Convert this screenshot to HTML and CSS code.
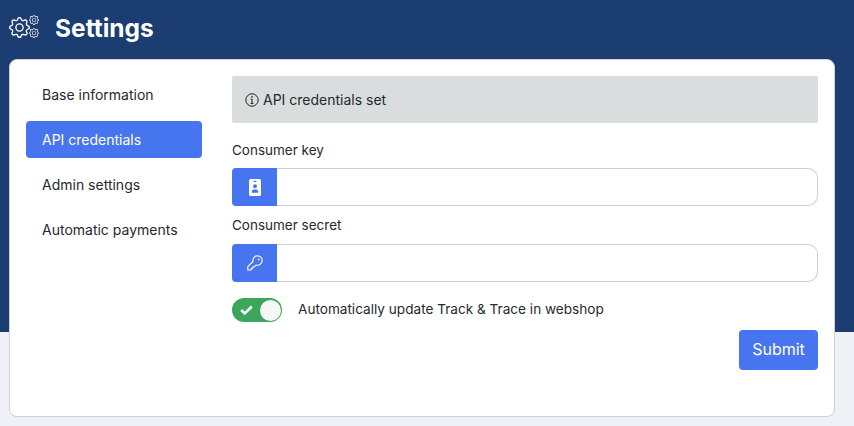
FILE: index.html
```html
<!DOCTYPE html>
<html lang="en">
<head>
    <meta charset="UTF-8">
    <meta name="viewport" content="width=device-width, initial-scale=1.0">
    <title>Settings</title>
    <link rel="stylesheet" href="styles.css">
</head>
<body>
    <svg class="icon-defs" width="0" height="0">
        <symbol id="gear" viewBox="0 0 16 16">
            <path d="M8 4.754a3.246 3.246 0 1 0 0 6.492 3.246 3.246 0 0 0 0-6.492zM5.754 8a2.246 2.246 0 1 1 4.492 0 2.246 2.246 0 0 1-4.492 0z"/>
            <path d="M9.796 1.343c-.527-1.79-3.065-1.79-3.592 0l-.094.319a.873.873 0 0 1-1.255.52l-.292-.16c-1.64-.892-3.433.902-2.54 2.541l.159.292a.873.873 0 0 1-.52 1.255l-.319.094c-1.79.527-1.79 3.065 0 3.592l.319.094a.873.873 0 0 1 .52 1.255l-.16.292c-.892 1.64.901 3.434 2.541 2.54l.292-.159a.873.873 0 0 1 1.255.52l.094.319c.527 1.79 3.065 1.79 3.592 0l.094-.319a.873.873 0 0 1 1.255-.52l.292.16c1.64.893 3.434-.902 2.54-2.541l-.159-.292a.873.873 0 0 1 .52-1.255l.319-.094c1.79-.527 1.79-3.065 0-3.592l-.319-.094a.873.873 0 0 1-.52-1.255l.16-.292c.893-1.64-.902-3.433-2.541-2.54l-.292.159a.873.873 0 0 1-1.255-.52l-.094-.319zm-2.633.283c.246-.835 1.428-.835 1.674 0l.094.319a1.873 1.873 0 0 0 2.693 1.115l.291-.16c.764-.415 1.6.42 1.184 1.185l-.159.292a1.873 1.873 0 0 0 1.116 2.692l.318.094c.835.246.835 1.428 0 1.674l-.319.094a1.873 1.873 0 0 0-1.115 2.693l.16.291c.415.764-.42 1.6-1.185 1.184l-.291-.159a1.873 1.873 0 0 0-2.693 1.116l-.094.318c-.246.835-1.428.835-1.674 0l-.094-.319a1.873 1.873 0 0 0-2.692-1.115l-.292.16c-.764.415-1.6-.42-1.184-1.185l.159-.291A1.873 1.873 0 0 0 1.945 8.93l-.319-.094c-.835-.246-.835-1.428 0-1.674l.319-.094A1.873 1.873 0 0 0 3.06 4.377l-.16-.292c-.415-.764.42-1.6 1.185-1.184l.292.159a1.873 1.873 0 0 0 2.692-1.115l.094-.319z"/>
        </symbol>
    </svg>

    <header class="topbar">
        <svg class="logo" width="31" height="25" viewBox="0 0 31 25" fill="#fff">
            <use href="#gear" x="0" y="3" width="21" height="21"/>
            <use href="#gear" x="20" y="1" width="10" height="10"/>
            <use href="#gear" x="20" y="14" width="10" height="10"/>
        </svg>
        <h1>Settings</h1>
    </header>

    <main class="card">
        <nav class="side-nav">
            <a class="nav-item">Base information</a>
            <a class="nav-item active">API credentials</a>
            <a class="nav-item">Admin settings</a>
            <a class="nav-item">Automatic payments</a>
        </nav>

        <form class="panel">
            <div class="alert">
                <svg width="14" height="14" viewBox="0 0 14 14" fill="none" stroke="#222" stroke-width="1">
                    <circle cx="7" cy="7" r="6.200"/>
                    <path d="M7 6v4.400M5.800 6.200H7M5.600 10.400h2.800"/>
                    <circle cx="7" cy="3.900" r=".8" fill="#222" stroke="none"/>
                </svg>
                <span>API credentials set</span>
            </div>

            <label class="field-label" for="consumer-key">Consumer key</label>
            <div class="input-group">
                <span class="addon">
                    <svg width="12" height="17" viewBox="0 0 12 17">
                        <path fill="#fff" d="M1.500 0h9A1.500 1.500 0 0 1 12 1.500v14a1.500 1.500 0 0 1-1.500 1.500h-9A1.500 1.500 0 0 1 0 15.500v-14A1.500 1.500 0 0 1 1.500 0z"/>
                        <rect x="4.500" y="1.800" width="3" height="1.200" rx=".6" fill="#4775ef"/>
                        <circle cx="6" cy="7.300" r="2" fill="#4775ef"/>
                        <path fill="#4775ef" d="M2.800 13.800v-1.300c0-1.200 1-2 2.200-2h2c1.200 0 2.200.8 2.200 2v1.300z"/>
                    </svg>
                </span>
                <input type="text" id="consumer-key">
            </div>

            <label class="field-label secret-label" for="consumer-secret">Consumer secret</label>
            <div class="input-group">
                <span class="addon">
                    <svg width="16" height="16" viewBox="0 0 16 16" fill="none" stroke="#fff" stroke-width="1.100" stroke-linejoin="round">
                        <path d="M10.500.8a4.700 4.700 0 1 1-1.400 9.200L7.400 11.700H5.900v1.600H4.200V15H.8v-3.300L6 6.500A4.700 4.700 0 0 1 10.500.8z"/>
                        <circle cx="11.600" cy="4.400" r=".9" fill="#fff" stroke="none"/>
                    </svg>
                </span>
                <input type="text" id="consumer-secret">
            </div>

            <div class="switch-row">
                <span class="switch">
                    <svg width="13" height="10" viewBox="0 0 13 10" fill="none" stroke="#fff" stroke-width="2.600">
                        <path d="M1.200 5l3.500 3.400L11.800 1.500"/>
                    </svg>
                    <span class="knob"></span>
                </span>
                <span class="switch-text">Automatically update Track &amp; Trace in webshop</span>
            </div>

            <div class="actions">
                <button type="submit">Submit</button>
            </div>
        </form>
    </main>
</body>
</html>
```

FILE: styles.css
```css
* {
    box-sizing: border-box;
}

body {
    font-family: Inter, "Liberation Sans", sans-serif;
    font-size: 14px;
    color: #252932;
    background-color: #f0f1f7;
    margin: 0;
    height: 426px;
    overflow: hidden;
}

.icon-defs {
    display: block;
}

.topbar {
    height: 332px;
    background-color: #1c3d72;
    color: #fff;
    display: flex;
    align-items: flex-start;
    padding: 14px 0 0 9px;
    gap: 15px;
}

.topbar h1 {
    margin: 0;
    font-size: 24.500px;
    font-weight: 700;
    line-height: 28px;
}

.logo {
    flex: none;
}

.card {
    width: 826px;
    height: 358px;
    margin: -273px 0 0 9px;
    background: #fff;
    border: 1px solid #cfd0d4;
    border-radius: 8px;
    display: flex;
    padding: 16px;
}

.side-nav {
    width: 176px;
    flex: none;
    display: flex;
    flex-direction: column;
    gap: 8px;
}

.nav-item {
    height: 37px;
    line-height: 37px;
    padding-left: 16px;
    border-radius: 4px;
}

.nav-item.active {
    background-color: #4775ef;
    color: #fff;
}

.panel {
    width: 586px;
    margin-left: 30px;
}

.alert {
    height: 47px;
    background-color: #dadddd;
    border-radius: 2px;
    display: flex;
    align-items: center;
    gap: 4px;
    padding-left: 13px;
}

.field-label {
    display: block;
    font-size: 13.500px;
    line-height: 18px;
    margin-top: 18px;
    margin-bottom: 9px;
}

.secret-label {
    margin-top: 10px;
    margin-bottom: 10px;
}

.input-group {
    display: flex;
    height: 38px;
}

.addon {
    width: 45px;
    flex: none;
    background-color: #4775ef;
    border-radius: 4px 0 0 4px;
    display: flex;
    align-items: center;
    justify-content: center;
}

.input-group input {
    flex: 1;
    border: 1px solid #cfd0d4;
    border-left: none;
    border-radius: 0 10px 10px 0;
    font: inherit;
    outline: none;
}

.switch-row {
    display: flex;
    align-items: center;
    gap: 16px;
    margin-top: 16px;
}

.switch {
    width: 50px;
    height: 24px;
    background-color: #3ca65c;
    border-radius: 12px;
    display: flex;
    align-items: center;
    justify-content: space-between;
    padding: 0 1.500px 0 8px;
}

.switch-text {
    font-size: 13.600px;
    padding-bottom: 2px;
}

.knob {
    width: 21px;
    height: 21px;
    border-radius: 50%;
    background-color: #f6f6f6;
}

.actions {
    display: flex;
    justify-content: flex-end;
    margin-top: 8px;
}

button {
    width: 79px;
    height: 40px;
    padding: 0 0 2px;
    background-color: #4775ef;
    color: #fff;
    border: none;
    border-radius: 4px;
    font: inherit;
    font-size: 16px;
    cursor: pointer;
}
```
